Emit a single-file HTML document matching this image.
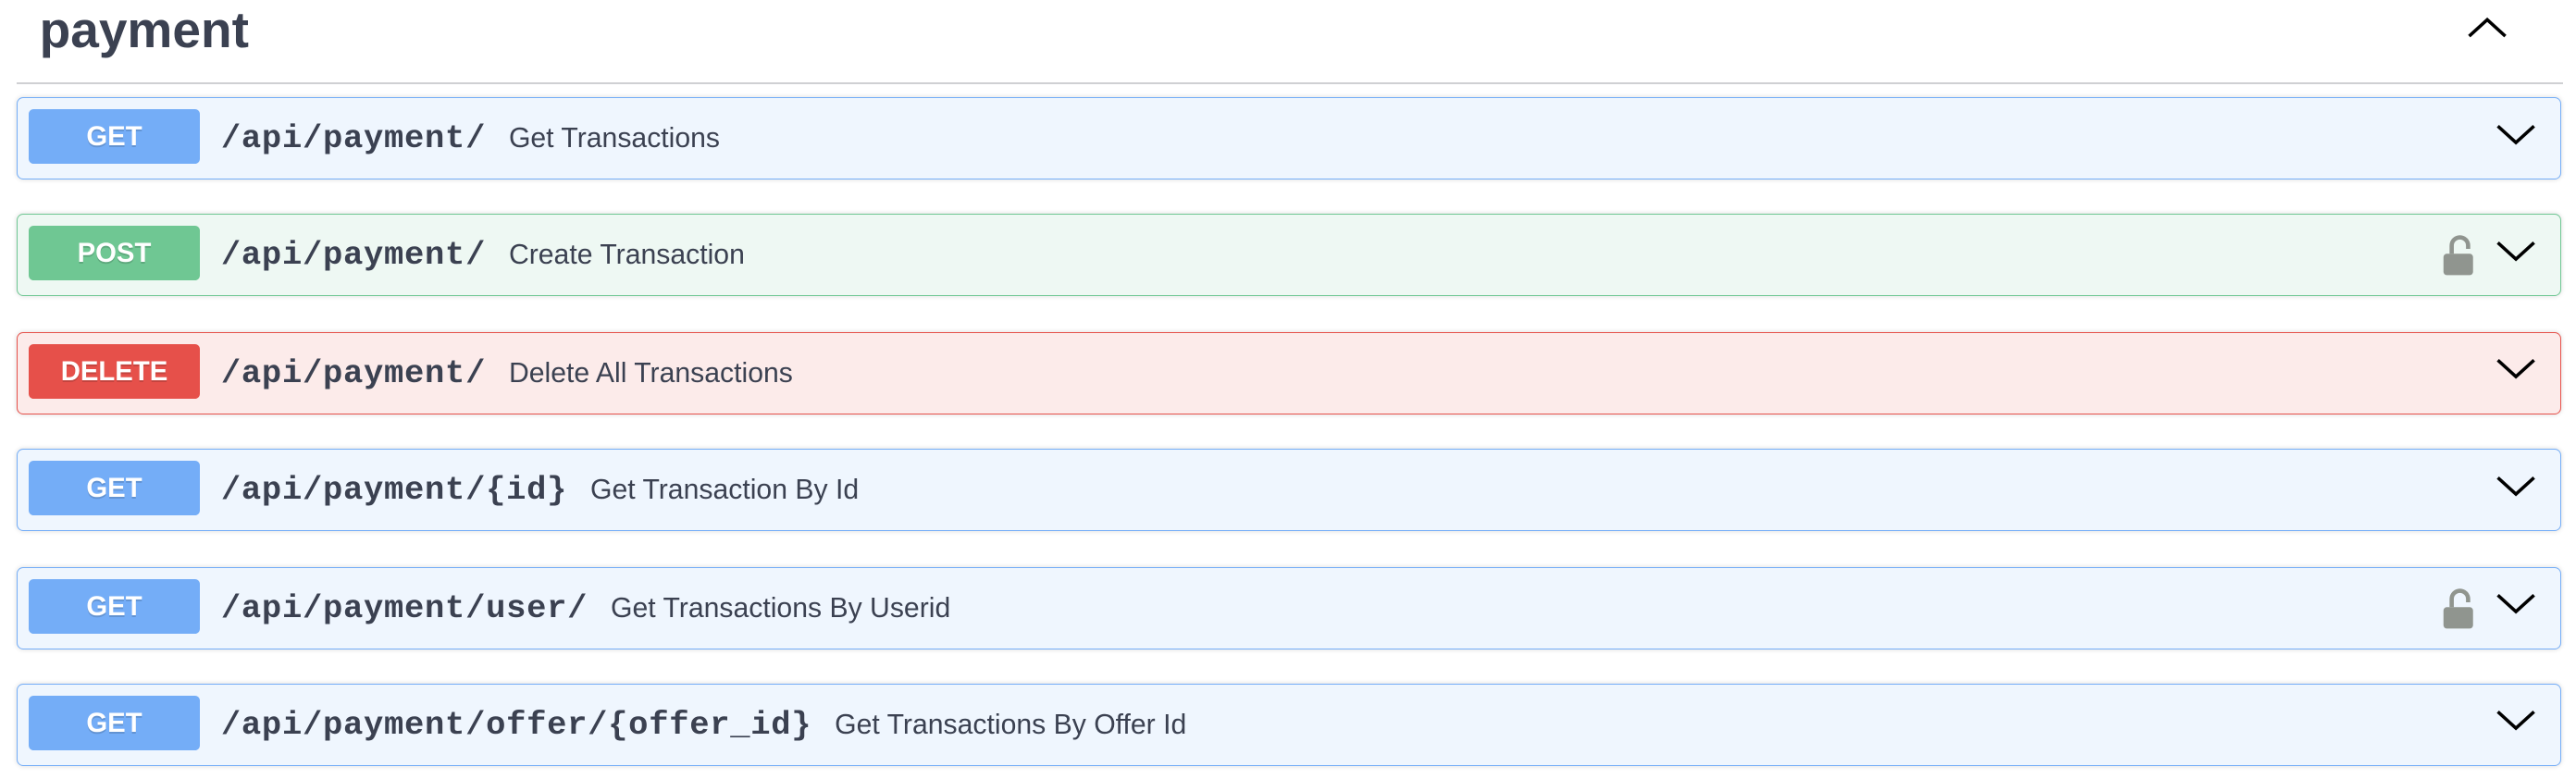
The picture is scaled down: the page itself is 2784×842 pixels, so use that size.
<!DOCTYPE html>
<html><head><meta charset="utf-8"><style>
html,body{margin:0;padding:0;background:#fff;}
body{width:1568px;height:474px;zoom:1.77551;overflow:hidden;position:relative;font-family:"Liberation Sans",sans-serif;}
.title{position:absolute;left:24px;top:0px;font-size:31px;font-weight:bold;color:#3b4151;letter-spacing:0;}
.up{position:absolute;left:1501px;top:9px;}
.hr{position:absolute;left:10px;width:1550px;top:50px;height:1px;background:#cfd0d3;}
.row{position:absolute;left:10px;width:1548px;height:49px;border:1px solid;border-radius:4px;box-shadow:0 0 3px rgba(0,0,0,.15);}
.badge{position:absolute;left:7px;top:7px;width:104px;height:33px;border-radius:3px;color:#fff;font-weight:bold;font-size:16.5px;text-align:center;line-height:34px;text-shadow:0 1px 0 rgba(0,0,0,.15);}
.path{position:absolute;left:124px;top:13px;font-family:"Liberation Mono",monospace;font-weight:bold;font-size:20px;letter-spacing:0.4px;color:#3b4151;line-height:24px;}
.desc{font-family:"Liberation Sans",sans-serif;font-weight:normal;font-size:17px;letter-spacing:0;color:#3b4151;margin-left:14px;}
.chev{position:absolute;left:1508px;top:14px;}
.lock{position:absolute;left:1476px;top:12px;}
.get{background:#eff6fe;border-color:#74adf7}.get .badge{background:#74adf7}
.post{background:#eef8f3;border-color:#6fc793}.post .badge{background:#6fc793}
.del{background:#fcebea;border-color:#e6504a}.del .badge{background:#e6504a}
</style></head><body>
<div class="title">payment</div>
<svg class="up" width="26" height="16" viewBox="0 0 26 16"><path d="M2 13 L13 3 L24 13" fill="none" stroke="#000" stroke-width="2"/></svg>
<div class="hr"></div>

<div class="row get" style="top:59px"><div class="badge">GET</div><div class="path">/api/payment/<span class="desc">Get Transactions</span></div>
<svg class="chev" width="26" height="18" viewBox="0 0 26 18"><path d="M2 3 L13 13 L24 3" fill="none" stroke="#000" stroke-width="2"/></svg></div>

<div class="row post" style="top:130px"><div class="badge">POST</div><div class="path">/api/payment/<span class="desc">Create Transaction</span></div>
<svg class="lock" width="20" height="26" viewBox="0 0 20 26"><path d="M6 12 V7 a5 5 0 0 1 10 0 V9" fill="none" stroke="#90958f" stroke-width="2.6"/><rect x="1" y="12" width="18" height="13" rx="2" fill="#90958f"/></svg>
<svg class="chev" width="26" height="18" viewBox="0 0 26 18"><path d="M2 3 L13 13 L24 3" fill="none" stroke="#000" stroke-width="2"/></svg></div>

<div class="row del" style="top:202px"><div class="badge">DELETE</div><div class="path">/api/payment/<span class="desc">Delete All Transactions</span></div>
<svg class="chev" width="26" height="18" viewBox="0 0 26 18"><path d="M2 3 L13 13 L24 3" fill="none" stroke="#000" stroke-width="2"/></svg></div>

<div class="row get" style="top:273px"><div class="badge">GET</div><div class="path">/api/payment/{id}<span class="desc">Get Transaction By Id</span></div>
<svg class="chev" width="26" height="18" viewBox="0 0 26 18"><path d="M2 3 L13 13 L24 3" fill="none" stroke="#000" stroke-width="2"/></svg></div>

<div class="row get" style="top:345px"><div class="badge">GET</div><div class="path">/api/payment/user/<span class="desc">Get Transactions By Userid</span></div>
<svg class="lock" width="20" height="26" viewBox="0 0 20 26"><path d="M6 12 V7 a5 5 0 0 1 10 0 V9" fill="none" stroke="#90958f" stroke-width="2.6"/><rect x="1" y="12" width="18" height="13" rx="2" fill="#90958f"/></svg>
<svg class="chev" width="26" height="18" viewBox="0 0 26 18"><path d="M2 3 L13 13 L24 3" fill="none" stroke="#000" stroke-width="2"/></svg></div>

<div class="row get" style="top:416px"><div class="badge">GET</div><div class="path">/api/payment/offer/{offer_id}<span class="desc">Get Transactions By Offer Id</span></div>
<svg class="chev" width="26" height="18" viewBox="0 0 26 18"><path d="M2 3 L13 13 L24 3" fill="none" stroke="#000" stroke-width="2"/></svg></div>
</body></html>
